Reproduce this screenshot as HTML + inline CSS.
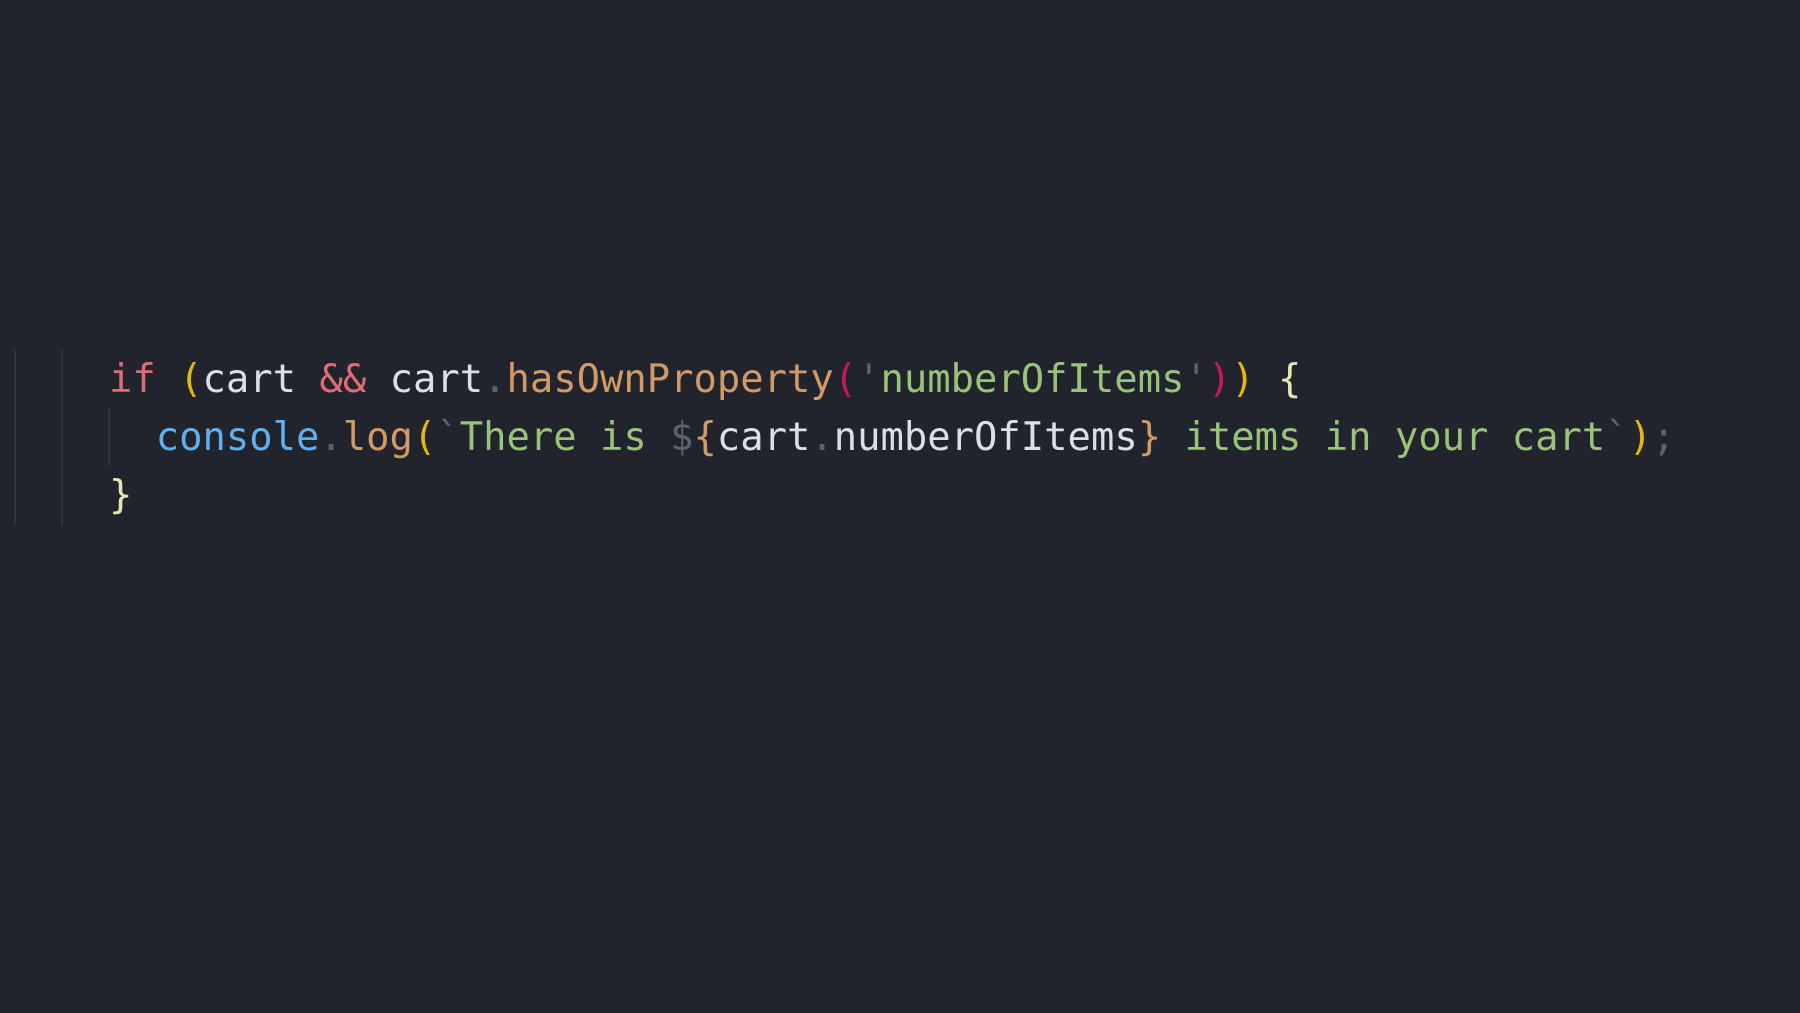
<!DOCTYPE html>
<html><head><meta charset="utf-8"><style>
html,body{margin:0;padding:0;background:#21242c;width:1800px;height:1013px;overflow:hidden}
.g{position:absolute;width:2px;background:#2f333d}
.code{position:absolute;left:109px;top:351px;font-family:"DejaVu Sans Mono","Liberation Mono",monospace;font-size:38.85px;line-height:58px;white-space:pre;color:#dcdfe4}
.k{color:#e06c75}.y{color:#e5c07b}.p{color:#5c6370}.f{color:#d19a66}.m{color:#c7185c}.s{color:#98c379}.b{color:#e6e6b0}.c{color:#61afef}.gy{color:#e5b80b}
</style></head><body>
<div class="g" style="left:14px;top:350px;height:175px"></div>
<div class="g" style="left:61px;top:350px;height:175px"></div>
<div class="g" style="left:108px;top:408px;height:58px"></div>
<div class="code"><span class="k">if</span> <span class="gy">(</span>cart <span class="k">&amp;&amp;</span> cart<span class="p">.</span><span class="f">hasOwnProperty</span><span class="m">(</span><span class="p">'</span><span class="s">numberOfItems</span><span class="p">'</span><span class="m">)</span><span class="gy">)</span> <span class="b">{</span>
  <span class="c">console</span><span class="p">.</span><span class="f">log</span><span class="gy">(</span><span class="p">`</span><span class="s">There is </span><span class="p">$</span><span class="f">{</span>cart<span class="p">.</span>numberOfItems<span class="f">}</span><span class="s"> items in your cart</span><span class="p">`</span><span class="gy">)</span><span class="p">;</span>
<span class="b">}</span></div>
</body></html>
